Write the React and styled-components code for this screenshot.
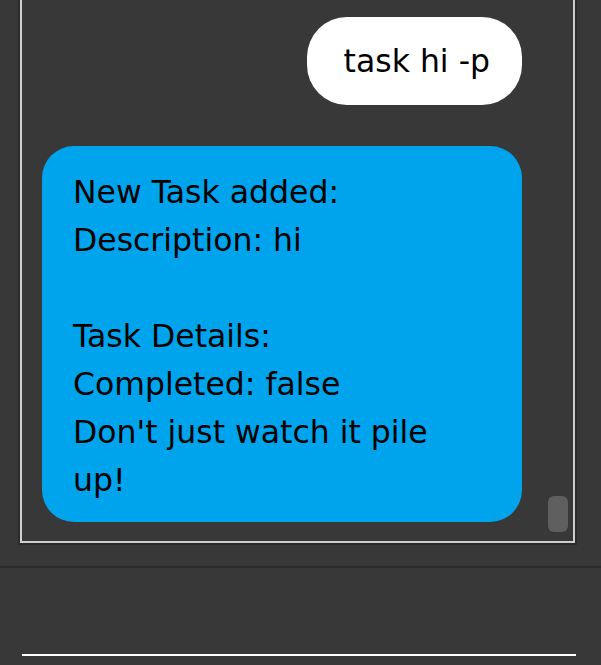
import React from "react";
import styled, { createGlobalStyle } from "styled-components";

const GlobalStyle = createGlobalStyle`
  html, body {
    margin: 0;
    padding: 0;
    background: #383838;
    overflow: hidden;
  }
  body {
    font-family: "Comic Sans MS", "DejaVu Sans", sans-serif;
  }
`;

const Page = styled.div`
  display: flex;
  flex-direction: column;
  width: 601px;
  height: 665px;
  background: #383838;
`;

const Frame = styled.div`
  display: flex;
  margin: 0 26px 0 20px;
  border: 2px solid #cfcfcf;
  border-top: none;
  box-shadow: 0 0 0 2px #2c2c2c;
`;

const Messages = styled.div`
  flex: 1;
  display: flex;
  flex-direction: column;
  align-items: flex-end;
  gap: 41px;
  padding: 17px 26px 19px 20px;
`;

const Bubble = styled.div`
  box-sizing: border-box;
  color: #000;
  font-size: 31.5px;
  line-height: 48px;
  white-space: pre-line;
  background: ${(p) => (p.$bot ? "#00a4ec" : "#ffffff")};
  border-radius: ${(p) => (p.$bot ? "32px" : "40px")};
  padding: ${(p) => (p.$bot ? "22px 40px 18px 31px" : "20px 32px 20px 37px")};
  width: ${(p) => (p.$bot ? "100%" : "auto")};
`;

const Track = styled.div`
  width: 25px;
  display: flex;
  flex-direction: column;
  justify-content: flex-end;
  padding: 0 5px 9px 0;
  box-sizing: border-box;
`;

const Thumb = styled.div`
  width: 20px;
  height: 36px;
  border-radius: 6px;
  background: #5f5f5f;
`;

const InputBar = styled.div`
  margin-top: 23px;
  flex: 1;
  display: flex;
  align-items: flex-end;
  border-top: 2px solid #2b2b2b;
  padding: 0 25px 9px 22px;
`;

const Input = styled.input`
  flex: 1;
  height: 40px;
  background: transparent;
  border: none;
  border-bottom: 2px solid #ffffff;
  color: #fff;
  font-family: inherit;
  font-size: 24px;
  outline: none;
  padding: 0;
`;

const botText = `New Task added:
Description: hi

Task Details:
Completed: false
Don't just watch it pile up!`;

export default function App() {
  return (
    <Page>
      <GlobalStyle />
      <Frame>
        <Messages>
          <Bubble>task hi -p</Bubble>
          <Bubble $bot>{botText}</Bubble>
        </Messages>
        <Track>
          <Thumb />
        </Track>
      </Frame>
      <InputBar>
        <Input aria-label="message" />
      </InputBar>
    </Page>
  );
}
